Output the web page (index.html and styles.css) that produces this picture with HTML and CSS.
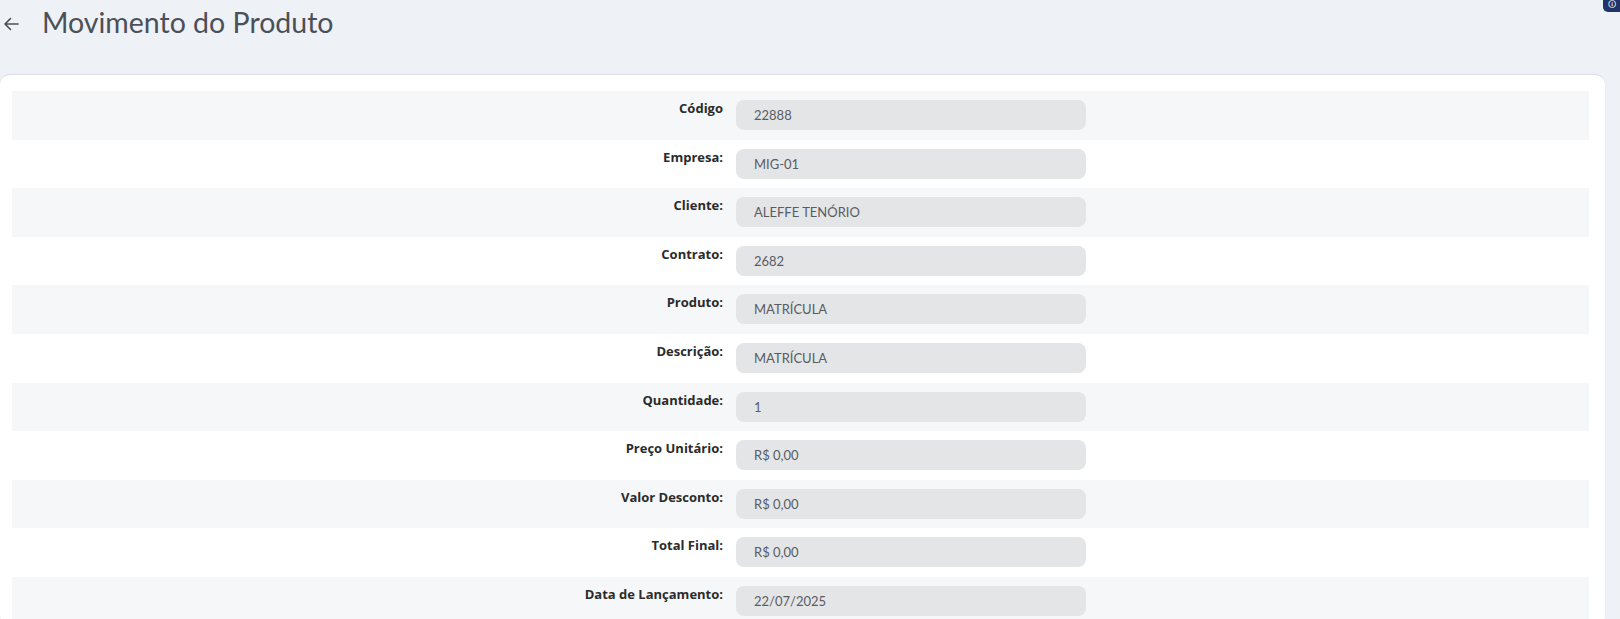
FILE: index.html
```html
<!DOCTYPE html>
<html>
    <head>
        <meta charset="UTF-8">
        <title>Movimento do Produto</title>

        <link rel="stylesheet" href="styles.css">
    </head>

    <body>

        <div class="corner-badge"><span>&#x1F6C8;</span></div>

        <div class="page-header">
            <svg class="back-arrow" width="18" height="16" viewBox="0 0 18 16">
                <path d="M16 8 H3 M8.5 2.5 L3 8 L8.5 13.5" fill="none" stroke="#4b5058" stroke-width="1.6" stroke-linecap="round" stroke-linejoin="round"/>
            </svg>
            <h1 class="page-title">Movimento do Produto</h1>
        </div>

        <div class="card">
            <div class="field-row">
                <label class="field-label">Código</label>
                <div class="field-value">22888</div>
            </div>
            <div class="field-row">
                <label class="field-label">Empresa:</label>
                <div class="field-value">MIG-01</div>
            </div>
            <div class="field-row">
                <label class="field-label">Cliente:</label>
                <div class="field-value">ALEFFE TENÓRIO</div>
            </div>
            <div class="field-row">
                <label class="field-label">Contrato:</label>
                <div class="field-value">2682</div>
            </div>
            <div class="field-row">
                <label class="field-label">Produto:</label>
                <div class="field-value">MATRÍCULA</div>
            </div>
            <div class="field-row">
                <label class="field-label">Descrição:</label>
                <div class="field-value">MATRÍCULA</div>
            </div>
            <div class="field-row">
                <label class="field-label">Quantidade:</label>
                <div class="field-value">1</div>
            </div>
            <div class="field-row">
                <label class="field-label">Preço Unitário:</label>
                <div class="field-value">R$ 0,00</div>
            </div>
            <div class="field-row">
                <label class="field-label">Valor Desconto:</label>
                <div class="field-value">R$ 0,00</div>
            </div>
            <div class="field-row">
                <label class="field-label">Total Final:</label>
                <div class="field-value">R$ 0,00</div>
            </div>
            <div class="field-row">
                <label class="field-label">Data de Lançamento:</label>
                <div class="field-value">22/07/2025</div>
            </div>
        </div>

    </body>
</html>
```

FILE: styles.css
```css
body {
    margin: 0;
    background-color: #eef1f6;
    font-family: "Lato", "Open Sans", sans-serif;
    color: #4b5058;
    overflow: hidden;
}

.corner-badge {
    position: absolute;
    top: 0;
    right: 0;
    width: 17px;
    height: 12px;
    background-color: #1f3568;
    border-bottom-left-radius: 5px;
    color: #ffffff;
    font-size: 8px;
    line-height: 8px;
    text-align: center;
    overflow: hidden;
}

.page-header {
    display: flex;
    align-items: center;
    height: 44px;
    padding-left: 2px;
    margin-bottom: 30px;
}

.back-arrow {
    margin-top: 3px;
}

.page-title {
    margin: 0 0 0 22px;
    font-size: 28.5px;
    font-weight: 400;
    color: #4b5058;
}

.card {
    margin-right: 15px;
    background-color: #ffffff;
    border-top: 1px solid #dcdfe7;
    border-radius: 10px;
    padding: 16px 16px 0 12px;
    box-shadow: 0 0 2px rgba(0, 0, 0, 0.06);
}

.field-row {
    display: grid;
    grid-template-columns: 711px 350px;
    column-gap: 13px;
    align-items: start;
    height: 48.6px;
    box-sizing: border-box;
    padding-top: 9px;
}

.field-row:nth-child(odd) {
    background-color: #f6f7f9;
}

.field-label {
    text-align: right;
    font-family: "Open Sans", "Noto Sans", sans-serif;
    font-size: 13px;
    font-weight: 700;
    color: #2b2b2b;
    line-height: 16px;
}

.field-value {
    height: 30px;
    line-height: 31px;
    box-sizing: border-box;
    padding-left: 18px;
    background-color: #e4e5e7;
    border-radius: 8px;
    font-size: 13px;
    color: #595c62;
}
```
